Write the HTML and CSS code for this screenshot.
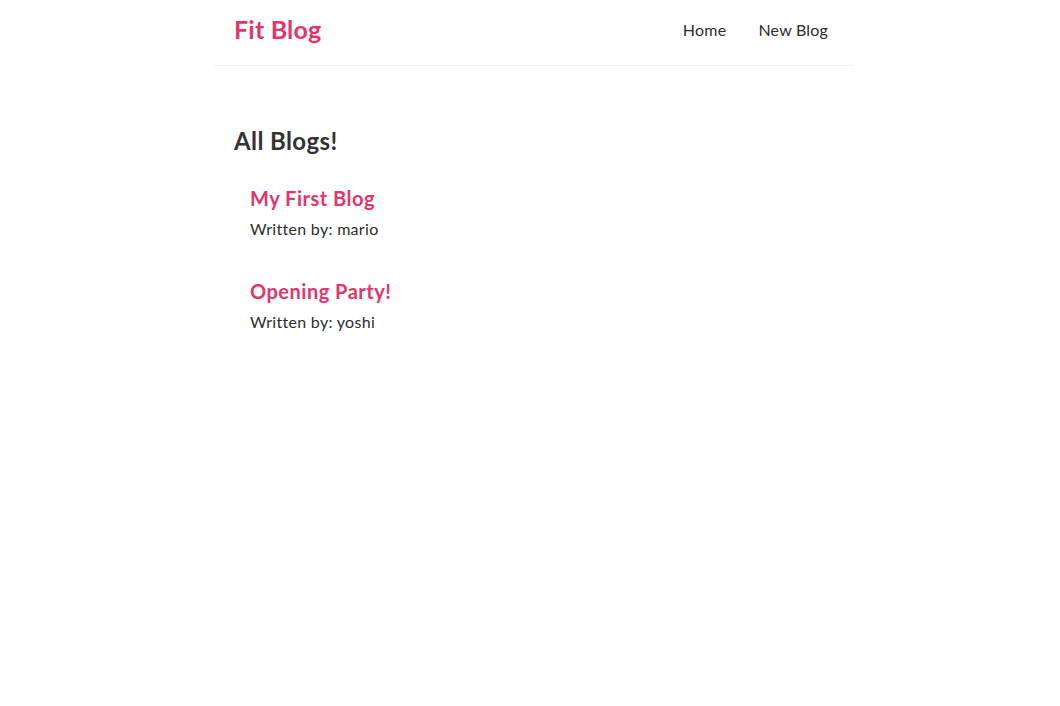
FILE: index.html
```
<!DOCTYPE html>
<html lang="en">
<head>
<meta charset="utf-8">
<title>Fit Blog</title>
<link rel="stylesheet" href="styles.css">
</head>
<body>
<div class="app">
  <nav class="navbar">
    <h1 class="brand">Fit Blog</h1>
    <div class="links">
      <a href="#" class="link">Home</a>
      <a href="#" class="link">New Blog</a>
    </div>
  </nav>
  <main class="content">
    <h2 class="page-title">All Blogs!</h2>
    <div class="blog-list">
      <div class="blog-preview">
        <h2 class="blog-title">My First Blog</h2>
        <p class="blog-author">Written by: mario</p>
      </div>
      <div class="blog-preview">
        <h2 class="blog-title">Opening Party!</h2>
        <p class="blog-author">Written by: yoshi</p>
      </div>
    </div>
  </main>
</div>
</body>
</html>
```
FILE: styles.css
```
* {
  margin: 0;
  box-sizing: content-box;
  font-family: "Lato", "Noto Sans", sans-serif;
  color: #333;
}
body {
  margin: 0;
  padding-left: 8px;
  background: #fff;
}
.navbar {
  display: flex;
  align-items: center;
  max-width: 600px;
  margin: 0 auto;
  padding: 17px 20px 23px;
  border-bottom: 1px solid #f2f2f2;
}
.brand {
  color: #e2356b;
  font-size: 25px;
  line-height: 25px;
  font-weight: 700;
  letter-spacing: 0.2px;
}
.links {
  margin-left: auto;
  line-height: 20px;
}
.link {
  margin-left: 16px;
  padding: 6px;
  text-decoration: none;
  font-size: 16px;
  font-weight: 400;
  letter-spacing: 0.2px;
  color: #2d2d2d;
}
.content {
  max-width: 600px;
  margin: 40px auto;
  padding: 20px;
}
.page-title {
  font-size: 24px;
  line-height: 30px;
  font-weight: 700;
  letter-spacing: 0.4px;
}
.blog-preview {
  padding: 10px 16px;
  margin: 20px 0;
}
.blog-title {
  font-size: 20px;
  line-height: 25px;
  color: #e2356b;
  font-weight: 700;
  margin-bottom: 8px;
  letter-spacing: 0.5px;
}
.blog-author {
  font-size: 16px;
  line-height: 20px;
  font-weight: 400;
  letter-spacing: 0.3px;
  color: #2d2d2d;
}
```
